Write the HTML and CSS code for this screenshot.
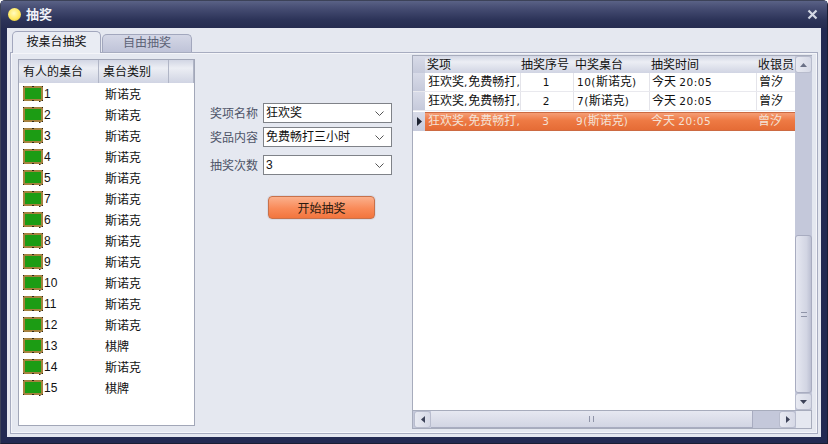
FILE: index.html
```html
<!DOCTYPE html>
<html lang="zh">
<head>
<meta charset="utf-8">
<title>抽奖</title>
<link rel="stylesheet" href="styles.css">
</head>
<body>
<svg class="defs" width="0" height="0">
  <symbol id="tbl" viewBox="0 0 20 16">
    <rect x="0" y="0" width="20" height="15" rx="1" fill="#a5823f"/>
    <rect x="2" y="2" width="16" height="11" fill="#1c9c14"/>
    <g fill="#2c2618"><rect x="0" y="0" width="1" height="1"/><rect x="19" y="0" width="1" height="1"/><rect x="0" y="14" width="1" height="1"/><rect x="19" y="14" width="1" height="1"/><rect x="9" y="0" width="2" height="1"/><rect x="9" y="14" width="2" height="1"/><rect x="16" y="15" width="1.500" height="1"/></g>
  </symbol>
</svg>
<div class="window">
  <div class="titlebar">
    <span class="lamp"></span>
    <span class="title">抽奖</span>
    <svg class="close" width="11" height="11" viewBox="0 0 11 11"><path d="M1.500 1.500l8 8M9.500 1.500l-8 8" stroke="#d4d8e4" stroke-width="2.200"/></svg>
  </div>
  <div class="client">
    <div class="tabs">
      <div class="tab active">按桌台抽奖</div>
      <div class="tab">自由抽奖</div>
    </div>
    <div class="panel">
      <div class="list">
        <div class="list-head"><span class="c1">有人的桌台</span><span class="c2">桌台类别</span><span class="c3"></span></div>
        <div class="list-row"><span class="c1"><svg class="ico"><use href="#tbl"/></svg>1</span><span class="c2">斯诺克</span></div>
        <div class="list-row"><span class="c1"><svg class="ico"><use href="#tbl"/></svg>2</span><span class="c2">斯诺克</span></div>
        <div class="list-row"><span class="c1"><svg class="ico"><use href="#tbl"/></svg>3</span><span class="c2">斯诺克</span></div>
        <div class="list-row"><span class="c1"><svg class="ico"><use href="#tbl"/></svg>4</span><span class="c2">斯诺克</span></div>
        <div class="list-row"><span class="c1"><svg class="ico"><use href="#tbl"/></svg>5</span><span class="c2">斯诺克</span></div>
        <div class="list-row"><span class="c1"><svg class="ico"><use href="#tbl"/></svg>7</span><span class="c2">斯诺克</span></div>
        <div class="list-row"><span class="c1"><svg class="ico"><use href="#tbl"/></svg>6</span><span class="c2">斯诺克</span></div>
        <div class="list-row"><span class="c1"><svg class="ico"><use href="#tbl"/></svg>8</span><span class="c2">斯诺克</span></div>
        <div class="list-row"><span class="c1"><svg class="ico"><use href="#tbl"/></svg>9</span><span class="c2">斯诺克</span></div>
        <div class="list-row"><span class="c1"><svg class="ico"><use href="#tbl"/></svg>10</span><span class="c2">斯诺克</span></div>
        <div class="list-row"><span class="c1"><svg class="ico"><use href="#tbl"/></svg>11</span><span class="c2">斯诺克</span></div>
        <div class="list-row"><span class="c1"><svg class="ico"><use href="#tbl"/></svg>12</span><span class="c2">斯诺克</span></div>
        <div class="list-row"><span class="c1"><svg class="ico"><use href="#tbl"/></svg>13</span><span class="c2">棋牌</span></div>
        <div class="list-row"><span class="c1"><svg class="ico"><use href="#tbl"/></svg>14</span><span class="c2">斯诺克</span></div>
        <div class="list-row"><span class="c1"><svg class="ico"><use href="#tbl"/></svg>15</span><span class="c2">棋牌</span></div>
      </div>
      <div class="form">
        <div class="field f1"><label>奖项名称</label><div class="combo"><span>狂欢奖</span><svg class="chev" width="9" height="5" viewBox="0 0 9 5"><path d="M0.500 0.500l4 4 4-4" fill="none" stroke="#555"/></svg></div></div>
        <div class="field f2"><label>奖品内容</label><div class="combo"><span>免费畅打三小时</span><svg class="chev" width="9" height="5" viewBox="0 0 9 5"><path d="M0.500 0.500l4 4 4-4" fill="none" stroke="#555"/></svg></div></div>
        <div class="field f3"><label>抽奖次数</label><div class="combo"><span>3</span><svg class="chev" width="9" height="5" viewBox="0 0 9 5"><path d="M0.500 0.500l4 4 4-4" fill="none" stroke="#555"/></svg></div></div>
        <button class="start">开始抽奖</button>
      </div>
      <div class="grid">
        <div class="grid-main">
          <div class="grid-body">
            <div class="g-row g-head"><span class="ind"></span><span class="a">奖项</span><span class="b">抽奖序号</span><span class="c">中奖桌台</span><span class="d">抽奖时间</span><span class="e">收银员</span></div>
            <div class="g-row"><span class="ind"></span><span class="a">狂欢奖<i class="n sep">,</i>免费畅打<i class="n">,</i></span><span class="b mid"><i class="n">1</i></span><span class="c"><i class="n">10(</i>斯诺克<i class="n">)</i></span><span class="d">今天 <i class="n">20:05</i></span><span class="e">曾汐</span></div>
            <div class="g-row"><span class="ind"></span><span class="a">狂欢奖<i class="n sep">,</i>免费畅打<i class="n">,</i></span><span class="b mid"><i class="n">2</i></span><span class="c"><i class="n">7(</i>斯诺克<i class="n">)</i></span><span class="d">今天 <i class="n">20:05</i></span><span class="e">曾汐</span></div>
            <div class="g-row sel"><span class="ind"><svg width="5" height="9" viewBox="0 0 5 9"><path d="M0 0l5 4.500-5 4.500z" fill="#1c2230"/></svg></span><span class="a">狂欢奖<i class="n sep">,</i>免费畅打<i class="n">,</i></span><span class="b mid"><i class="n">3</i></span><span class="c"><i class="n">9(</i>斯诺克<i class="n">)</i></span><span class="d">今天 <i class="n">20:05</i></span><span class="e">曾汐</span></div>
          </div>
          <div class="vbar">
            <div class="sbtn v"><svg width="7" height="4" viewBox="0 0 7 4"><path d="M3.500 0l3.500 4h-7z" fill="#6a7086"/></svg></div>
            <div class="vtrack"></div>
            <div class="vthumb"><span class="grip"></span></div>
            <div class="sbtn v"><svg width="7" height="4" viewBox="0 0 7 4"><path d="M0 0h7l-3.500 4z" fill="#3c4258"/></svg></div>
          </div>
        </div>
        <div class="hbar">
          <div class="sbtn h"><svg width="4" height="7" viewBox="0 0 4 7"><path d="M4 0v7l-4-3.500z" fill="#3c4258"/></svg></div>
          <div class="hthumb"><span class="hgrip"></span></div>
          <div class="htrack"></div>
          <div class="sbtn h"><svg width="4" height="7" viewBox="0 0 4 7"><path d="M0 0l4 3.500-4 3.500z" fill="#3c4258"/></svg></div>
          <div class="corner"></div>
        </div>
      </div>
    </div>
  </div>
</div>
</body>
</html>
```

FILE: styles.css
```css
* { box-sizing: border-box; }
html, body { margin: 0; padding: 0; }
body {
  width: 828px;
  height: 444px;
  overflow: hidden;
  font: 12px "Liberation Sans", "Noto Sans CJK SC", sans-serif;
  color: #111;
}
.defs { display: block; height: 0; }
.window {
  width: 828px;
  height: 444px;
  background: #232a52;
  border: 1px solid #3c4258;
  border-right-color: #1a1e34;
  border-bottom-color: #1a1e34;
  border-radius: 5px 5px 0 0;
  display: flex;
  flex-direction: column;
}
.titlebar {
  height: 27px;
  flex: none;
  display: flex;
  align-items: center;
  padding: 0 9px 0 7px;
  background: linear-gradient(#5a6286 0, #474e74 25%, #2c3358 70%, #262c50 100%);
}
.lamp {
  width: 13px;
  height: 13px;
  border-radius: 50%;
  background: radial-gradient(circle at 45% 40%, #fffbc0 0, #ffe860 55%, #d8b820 100%);
}
.title {
  margin-left: 5px;
  padding-bottom: 2px;
  font-size: 13px;
  font-weight: 700;
  color: #f0f2f8;
}
.close { margin-left: auto; }
.client {
  flex: 1;
  margin: 0 6px 6px;
  background: #e5e8f0;
  display: flex;
  flex-direction: column;
  padding: 3px;
  min-height: 0;
}
.tabs {
  height: 21px;
  flex: none;
  display: flex;
  align-items: flex-end;
  padding-left: 2px;
  position: relative;
  z-index: 1;
}
.tab {
  width: 90px;
  height: 18px;
  margin-right: 1px;
  border: 1px solid #a2a7bd;
  border-bottom: none;
  border-radius: 5px 5px 0 0;
  background: linear-gradient(#d4d7e6, #bfc3d8);
  color: #5c6276;
  text-align: center;
  line-height: 16px;
}
.tab.active {
  width: 89px;
  height: 22px;
  margin-bottom: -1px;
  background: #e9ecf3;
  color: #111;
  line-height: 20px;
}
.panel {
  flex: 1;
  min-height: 0;
  border: 1px solid #a7acc0;
  box-shadow: inset 0 0 0 1px #f4f5f9;
  display: flex;
  padding: 6px 4px 6px 7px;
  align-items: flex-start;
}
.list {
  width: 177px;
  height: 367px;
  flex: none;
  background: #fff;
  border: 1px solid #a2a7b8;
  overflow: hidden;
}
.list-head {
  height: 23px;
  display: flex;
  align-items: center;
  background: linear-gradient(#d2d6e4, #eceef4 35%, #d0d4e3);
}
.list-head span {
  height: 23px;
  line-height: 24px;
  border-right: 1px solid #b0b5c6;
}
.list-head .c3 { width: 26px; }
.list-head .c1 { padding-left: 4px; }
.list-head .c2 { padding-left: 4px; }
.c1 { width: 80px; padding-left: 4px; display: flex; align-items: center; flex: none; }
.c2 { width: 70px; padding-left: 6px; flex: none; }
.list-row {
  height: 21px;
  display: flex;
  align-items: center;
  font-size: 12px;
}
.ico {
  width: 20px;
  height: 16px;
  margin-right: 1px;
  flex: none;
}
.form {
  width: 217px;
  flex: none;
  height: 367px;
  display: flex;
  flex-direction: column;
  padding: 44px 0 0 15px;
}
.field {
  display: flex;
  align-items: center;
  height: 20px;
}
.field.f2 { margin-top: 4px; }
.field.f3 { margin-top: 8px; }
.field label {
  width: 53px;
  flex: none;
  padding-bottom: 2px;
  color: #4e5468;
}
.combo {
  width: 129px;
  height: 20px;
  border: 1px solid #7f8288;
  background: #fff;
  display: flex;
  align-items: center;
  justify-content: space-between;
  padding: 0 7px 0 2px;
  line-height: 18px;
}
.chev { flex: none; }
.start {
  width: 107px;
  height: 23px;
  margin: 21px 0 0 58px;
  padding: 0;
  font: inherit;
  color: #2a1a10;
  border: 1px solid #c8714a;
  border-radius: 4px;
  background: linear-gradient(#fbb08c, #f98a58 55%, #f2753e);
  box-shadow: 0 0 0 1px #d8dae4;
}
.grid {
  width: 400px;
  height: 374px;
  margin-top: -4px;
  flex: none;
  border: 1px solid #a7acbc;
  background: #e5e8f0;
  display: flex;
  flex-direction: column;
}
.grid-main {
  flex: 1;
  display: flex;
  min-height: 0;
}
.grid-body {
  width: 382px;
  flex: none;
  background: #fff;
}
.g-row {
  height: 19px;
  display: flex;
  align-items: center;
  border-bottom: 1px solid #e9e9ee;
}
.g-row > span { height: 100%; line-height: 18px; flex: none; white-space: nowrap; overflow: hidden; }
.n {
  font-family: "DejaVu Sans", sans-serif;
  font-size: 10.5px;
  font-style: normal;
}
.sep { margin-right: 1px; }
.c .n, .d .n { letter-spacing: 0.5px; }
.g-head {
  height: 17px;
  border: 0;
  background: linear-gradient(#d2d6e4, #eceef4 35%, #d0d4e3);
}
.g-head > span { line-height: 18px; }
.ind {
  width: 12px;
  background: linear-gradient(#d8dbe8, #c6cadb);
  display: flex;
  align-items: center;
  justify-content: center;
}
.a { width: 95px; padding-left: 3px; }
.b { width: 53px; }
.c { width: 76px; padding-left: 3px; border-left: 1px solid #e4e4ea; }
.d { width: 107px; padding-left: 2px; border-left: 1px solid #e4e4ea; }
.e { width: 39px; padding-left: 2px; border-left: 1px solid #e4e4ea; }
.b.mid { border-left: 1px solid #e4e4ea; }
.g-head .a { padding-left: 2px; }
.g-head .b { padding-left: 1px; }
.g-head .c, .g-head .d, .g-head .e { border: 0; padding-left: 2px; }
.mid { text-align: center; padding-right: 2px; }
.g-row.sel {
  border: 0;
  margin-top: 1px;
  background: #fff;
}
.g-row.sel > span:not(.ind) {
  background: linear-gradient(#f6a27c, #ee7a44 45%, #e46a34);
  color: #f4e2d6;
  border: 0;
  box-shadow: inset 0 1px 0 #cc6a42, inset 0 -1px 0 #cc6a42;
}
.vbar {
  width: 17px;
  flex: none;
  display: flex;
  flex-direction: column;
  background: #c4c8da;
}
.sbtn {
  flex: none;
  display: flex;
  align-items: center;
  justify-content: center;
  border: 1px solid #b8bccd;
  border-radius: 3px;
  background: linear-gradient(90deg, #e8eaf2, #d6d9e6);
}
.sbtn.v { height: 17px; width: 17px; }
.sbtn.h { height: 17px; width: 17px; }
.vtrack { height: 162px; flex: none; }
.vthumb {
  flex: 1;
  display: flex;
  align-items: center;
  justify-content: center;
  border: 1px solid #a8acc0;
  border-radius: 3px;
  background: linear-gradient(90deg, #e6e8f1, #d2d5e3 70%, #bcc0d2);
}
.grip {
  width: 6px;
  height: 5px;
  border-top: 1px solid #8f94a8;
  border-bottom: 1px solid #8f94a8;
}
.hbar {
  height: 18px;
  flex: none;
  display: flex;
  border-top: 1px solid #a7acbc;
  background: #c4c8da;
  padding-left: 1px;
}
.hthumb {
  width: 322px;
  flex: none;
  display: flex;
  align-items: center;
  justify-content: center;
  border-right: 1px solid #a8acc0;
  border-bottom: 1px solid #a8acc0;
  background: linear-gradient(#e6e8f1, #d2d5e3);
}
.hgrip {
  width: 5px;
  height: 6px;
  border-left: 1px solid #8f94a8;
  border-right: 1px solid #8f94a8;
}
.htrack { width: 26px; flex: none; }
.corner { flex: 1; background: #e5e8f0; }
```
